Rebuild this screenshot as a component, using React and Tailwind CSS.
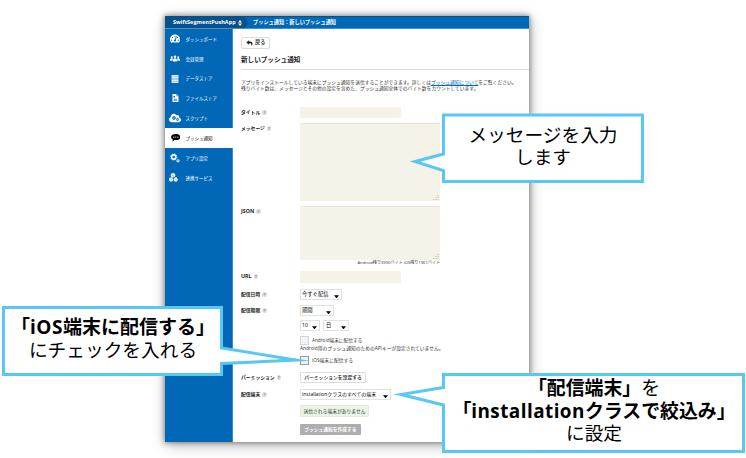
import React from "react";
import { FaTachometerAlt, FaCloud, FaCog, FaReply } from "react-icons/fa";

const People = () => (
  <svg viewBox="0 0 22 14" className="h-[7px] w-[10px]" fill="white">
    <circle cx="4" cy="4" r="2.2" /><circle cx="18" cy="4" r="2.2" /><circle cx="11" cy="3" r="2.8" />
    <path d="M0 12c0-4 1-5.500 4-5.500 1.500 0 2 .5 2.500 1.200L5.500 12zM22 12c0-4-1-5.500-4-5.500-1.500 0-2 .5-2.500 1.200L16.500 12zM6.500 13.500c0-5 1-7 4.500-7s4.500 2 4.500 7z" />
  </svg>
);

const Bubble = () => (
  <svg viewBox="0 0 20 16" className="h-[7.500px] w-[9.500px]">
    <path d="M10 0c6 0 10 2.800 10 6.500S16 13 10 13c-1 0-2 0-3-.3C6 14 4.500 15.500 2.500 16c.8-1.300 1.200-2.500 1.200-4.300C1.300 10.500 0 8.600 0 6.500 0 2.800 4 0 10 0z" fill="black" />
    <circle cx="5.500" cy="6.500" r="1.400" fill="white" /><circle cx="10" cy="6.500" r="1.400" fill="white" /><circle cx="14.500" cy="6.500" r="1.400" fill="white" />
  </svg>
);

const Database = () => (
  <svg viewBox="0 0 16 16" className="w-[8px] h-[8px]" fill="#e3eef8">
    <path d="M1 0h14v3.4H1zM1 4.2h14v3.4H1zM1 8.4h14v3.4H1zM1 12.6h14V16H1z" />
  </svg>
);

const FileIcon = () => (
  <svg viewBox="0 0 14 16" className="h-[8px] w-[7px]">
    <path d="M1 0h8l4 4v12H1z" fill="white" />
    <path d="M9 0v4h4" fill="none" stroke="#0068b7" />
    <path d="M3 13l2.5-4 2 2.5L9 10l2 3zM3 4h3v3H3z" fill="#0068b7" />
  </svg>
);

const ScriptCloud = () => (
  <span className="relative block w-[12px] h-[10px]">
    <FaCloud className="w-[12px] h-[10px]" />
    <FaCog className="absolute left-[3px] top-[3px] w-[4px] h-[4px] text-[#0068b7]" />
    <FaCog className="absolute left-[7px] top-[5px] w-[3px] h-[3px] text-[#0068b7]" />
  </span>
);

const Gears = () => (
  <svg viewBox="0 0 20 20" className="w-[10px] h-[10px]" fill="none" stroke="white">
    <circle cx="7.5" cy="8" r="4.2" strokeWidth="3.2" />
    <circle cx="7.5" cy="8" r="6.3" strokeWidth="1.6" strokeDasharray="2.4 2.5" />
    <circle cx="16" cy="15.5" r="2" strokeWidth="1.8" />
    <circle cx="16" cy="15.5" r="3.2" strokeWidth="1" strokeDasharray="1.2 1.3" />
  </svg>
);

const Services = () => (
  <svg viewBox="0 0 18 18" className="-ml-[4px] h-[9px] w-[9px]">
    <path d="M5 1l5-1 3 4-2 4-5 1-3-4zM1 9.500l5-1 2.500 4.500-2 4H2l-2-3zM10.500 9.500l4.500-1 3 4.500-2 4h-5l-2-3z" fill="white" />
    <path d="M6 4l4 3M3 11l3 4M12 11l4 4" stroke="#0068b7" strokeWidth="1" />
  </svg>
);

const nav = [
  { label: "ダッシュボード", icon: <FaTachometerAlt className="w-[10px] h-[9px]" /> },
  { label: "会員管理", icon: <People /> },
  { label: "データストア", icon: <Database /> },
  { label: "ファイルストア", icon: <FileIcon /> },
  { label: "スクリプト", icon: <ScriptCloud /> },
  { label: "プッシュ通知", icon: <Bubble />, active: true },
  { label: "アプリ設定", icon: <Gears /> },
  { label: "連携サービス", icon: <Services /> },
];

const Help = () => (
  <span className="ml-[2px] flex h-[4.5px] w-[4.5px] items-center justify-center rounded-full bg-[#dcdcdc] text-[4px] font-normal text-[#555]">?</span>
);

const Row = ({ label, className, children }) => (
  <div className={"flex items-start " + className}>
    <div className="flex h-[11px] w-[59px] shrink-0 items-center text-[4.8px] font-bold text-[#222]">
      {label && <><span className={/^[A-Z]+$/.test(label) ? "text-[5.3px]" : ""}>{label}</span><Help /></>}
    </div>
    {children}
  </div>
);

const Select = ({ children, className }) => (
  <div className={"flex h-[10.5px] items-center justify-between border border-[#e2e2e2] bg-white pl-[1px] pr-[2px] text-[5.3px] text-black " + className}>
    <span>{children}</span>
    <svg viewBox="0 0 6 4" className="mt-[4px] h-[3.5px] w-[5px] shrink-0"><path d="M0 0.3h6L3 3.8z" /></svg>
  </div>
);

const Grip = () => (
  <svg viewBox="0 0 6 6" className="h-[6px] w-[6px]" stroke="#b5b5ac" strokeWidth="0.7" strokeDasharray="1 0.5">
    <path d="M4 1.5h2M2 3.5h4M0 5.5h6" />
  </svg>
);

const Area = ({ className }) => (
  <div className={"flex w-[140px] items-end justify-end border-t border-[#e9e7dc] bg-[#f5f3e7] p-px " + className}><Grip /></div>
);

const Checkbox = ({ className }) => (
  <span className={"h-[9px] w-[9px] border bg-[#f2f2f2] " + className} />
);

const Callout = ({ className, viewBox, path, shapeClass, children }) => (
  <div className={"absolute " + className}>
    <svg viewBox={viewBox} className={"absolute " + shapeClass}>
      <path d={path} fill="white" stroke="#58c8f2" strokeWidth="3" strokeMiterlimit="20" />
    </svg>
    <div className="relative flex flex-col items-center whitespace-nowrap text-[18.7px] leading-[22.5px] text-black">{children}</div>
  </div>
);

export default function App() {
  return (
    <div lang="ja" className="relative h-[458px] w-[746px] overflow-hidden bg-white pl-[165px] pt-[16px] font-['Open_Sans','Noto_Sans_CJK_JP',sans-serif]">
      <div className="flex h-[426px] w-[364px] flex-col overflow-hidden whitespace-nowrap bg-white leading-none shadow-[0_0_5px_1px_rgba(0,0,0,0.38),1px_3px_14px_rgba(0,0,0,0.28)]">
        <header className="flex h-[13px] shrink-0 items-center border-b border-t border-b-[#4b91c8] border-t-[#07518a] bg-[#0068b7] text-white">
          <div className="flex h-full w-[80px] shrink-0 items-center bg-[#07518d] pl-[8px] text-[5.55px] font-bold">
            <span className="w-[62px]">SwiftSegmentPushApp</span>
            <svg viewBox="0 0 4 6" className="ml-[3px] h-[6px] w-[4px] shrink-0" fill="white"><path d="M0 2.4L2 0l2 2.4zM0 3.6h4L2 6z" /></svg>
          </div>
          <svg viewBox="0 0 4 12" className="h-full w-[4px] shrink-0" fill="#07518d"><path d="M0 0l4 6-4 6z" /></svg>
          <span className="ml-[4px] text-[5.2px] font-bold">プッシュ通知：新しいプッシュ通知</span>
        </header>
        <div className="flex min-h-0 flex-1">
          <nav className="w-[68px] shrink-0 border-r border-[#3c8cc6] bg-[#0068b7]">
            {nav.map((n) => (
              <div key={n.label} className={"flex h-[19.85px] items-center text-[4.5px] " + (n.active ? "-mr-px bg-white text-black" : "text-white")}>
                <span className="flex w-[20.5px] items-center justify-center">{n.icon}</span>
                <span>{n.label}</span>
              </div>
            ))}
          </nav>
          <main className="w-[296px] pl-[8px] text-[4.78px] text-[#333]">
            <div className="mt-[8px] flex h-[12px] w-[29px] items-center rounded-[2px] border border-[#ddd] pl-[4px] text-[5.2px] font-medium text-[#222]">
              <FaReply className="h-[6px] w-[7px]" /><span className="ml-[2px]">戻る</span>
            </div>
            <h1 className="mt-[7px] h-[8px] text-[6.6px] font-bold leading-[8px] text-[#222]">新しいプッシュ通知</h1>
            <div className="mt-[5px] h-px bg-[#ddd]" />
            <p className="mt-[9px] h-[13px] leading-[6.4px]">
              アプリをインストールしている端末にプッシュ通知を送信することができます。詳しくは<a className="text-[#0068b7] underline decoration-[0.5px]">プッシュ通知について</a>をご覧ください。<br />
              残りバイト数は、メッセージとその他の設定を含めた、プッシュ通知全体でのバイト数をカウントしています。
            </p>
            <Row label="タイトル" className="mt-[15px]"><div className="h-[11px] w-[101px] bg-[#f5f3e7]" /></Row>
            <Row label="メッセージ" className="mt-[5px]"><Area className="h-[78px]" /></Row>
            <Row label="JSON" className="mt-[5px]"><Area className="h-[54px]" /></Row>
            <div className="h-[11px] w-[199px] pt-[1px] text-right text-[4.1px]">Android残り3990バイト iOS残り1961バイト</div>
            <Row label="URL"><div className="h-[12px] w-[101px] rounded-[1px] bg-[#f5f3e7]" /></Row>
            <Row label="配信日時" className="mt-[6px]"><Select className="w-[42px]">今すぐ配信</Select></Row>
            <Row label="配信期限" className="mt-[5px]"><Select className="w-[34px]">期間</Select></Row>
            <Row className="mt-[4px]">
              <Select className="w-[20px]">10</Select><Select className="ml-[3px] w-[26px] pl-[2px]">日</Select>
            </Row>
            <Row className="mt-[5px] h-[9px]"><Checkbox className="border-[#d5d5d5]" /><span className="ml-[3px] pt-[2px] text-[4.7px]">Android端末に配信する</span></Row>
            <div className="ml-[59px] h-[11px] pt-[1px] text-[4.75px]">Android用のプッシュ通知のためのAPIキーが設定されていません。</div>
            <Row className="h-[9px]"><Checkbox className="border-[#999]" /><span className="ml-[3px] pt-[2px] text-[4.8px]">iOS端末に配信する</span></Row>
            <Row label="パーミッション" className="mt-[7px]">
              <div className="flex h-[11px] w-[66px] items-center justify-center rounded-[1px] border border-[#ddd] text-[4.8px] font-medium text-[#111]">パーミッションを設定する</div>
            </Row>
            <Row label="配信端末" className="mt-[6px]"><Select className="w-[91px]"><span className="text-[4.95px]">installationクラスのすべての端末</span></Select></Row>
            <div className="ml-[59px] mt-[5px] flex h-[12px] w-[69px] items-center justify-center rounded-[1px] border border-[#e1edda] bg-[#ebf4e4] text-[4.8px]">送信される端末がありません</div>
            <div className="ml-[59px] mt-[7px] flex h-[11px] w-[61px] items-center justify-center rounded-[1px] bg-[#aeaeae] text-[4.75px] font-bold text-white">プッシュ通知を作成する</div>
          </main>
        </div>
      </div>

      <Callout className="left-[442px] top-[113px] h-[70px] w-[202px] pt-[10.5px]" viewBox="0 0 234 70" shapeClass="left-[-32px] top-0 h-[70px] w-[234px]"
        path="M33.5 2H232.5V68.5H33.5V57.5L5 48.5L33.5 41Z">
        <div>メッセージを入力</div>
        <div>します</div>
      </Callout>
      <Callout className="left-[2px] top-[306px] h-[70px] w-[222px] pt-[10px]" viewBox="0 0 306 70" shapeClass="left-0 top-0 h-[70px] w-[306px]"
        path="M1.5 1.5H219.5V42L294 54L219.5 57.5V68.5H1.5Z">
        <b className="text-[19px]">「<span className="tracking-[0.6px]">iOS</span>端末に配信する」</b>
        <div>にチェックを入れる</div>
      </Callout>
      <Callout className="left-[442px] top-[373px] h-[80px] w-[304px] pt-[4px]" viewBox="0 0 358 80" shapeClass="left-[-54px] top-0 h-[80px] w-[358px]"
        path="M55.5 1.5H355.5V78.5H55.5V32L13 21.5L55.5 14.5Z">
        <div className="text-[18.9px]"><b>「配信端末」</b>を</div>
        <b className="text-[18.9px]">「<span className="tracking-[0.45px]">installation</span>クラスで絞込み」</b>
        <div>に設定</div>
      </Callout>
    </div>
  );
}
